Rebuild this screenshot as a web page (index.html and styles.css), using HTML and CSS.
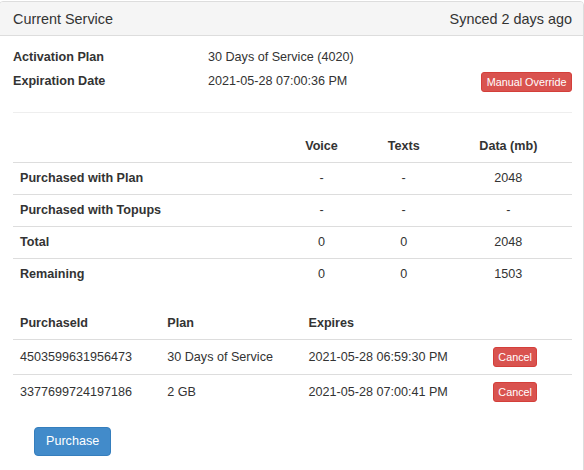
FILE: index.html
```html
<!DOCTYPE html>
<html>
<head>
<meta charset="utf-8">
<link rel="stylesheet" href="styles.css">
</head>
<body>
<div class="panel">
  <div class="panel-heading">
    <span class="title">Current Service</span>
    <span class="sync">Synced 2 days ago</span>
  </div>
  <div class="panel-body">
    <div class="info">
      <div class="info-label">Activation Plan</div>
      <div class="info-value">30 Days of Service (4020)</div>
      <div></div>
      <div class="info-label">Expiration Date</div>
      <div class="info-value">2021-05-28 07:00:36 PM</div>
      <div class="info-action"><button class="btn btn-xs btn-danger">Manual Override</button></div>
    </div>
    <hr class="divider">
    <table class="table usage">
      <colgroup>
        <col class="c-label"><col class="c-voice"><col class="c-texts"><col class="c-data">
      </colgroup>
      <thead>
        <tr><th></th><th class="center">Voice</th><th class="center">Texts</th><th class="center">Data (mb)</th></tr>
      </thead>
      <tbody>
        <tr><th>Purchased with Plan</th><td class="center">-</td><td class="center">-</td><td class="center">2048</td></tr>
        <tr><th>Purchased with Topups</th><td class="center">-</td><td class="center">-</td><td class="center">-</td></tr>
        <tr><th>Total</th><td class="center">0</td><td class="center">0</td><td class="center">2048</td></tr>
        <tr><th>Remaining</th><td class="center">0</td><td class="center">0</td><td class="center">1503</td></tr>
      </tbody>
    </table>
    <table class="table purchases">
      <colgroup>
        <col class="c-id"><col class="c-plan"><col class="c-exp"><col class="c-act">
      </colgroup>
      <thead>
        <tr><th>PurchaseId</th><th>Plan</th><th>Expires</th><th></th></tr>
      </thead>
      <tbody>
        <tr><td>4503599631956473</td><td>30 Days of Service</td><td>2021-05-28 06:59:30 PM</td><td><button class="btn btn-xs btn-danger">Cancel</button></td></tr>
        <tr><td>3377699724197186</td><td>2 GB</td><td>2021-05-28 07:00:41 PM</td><td><button class="btn btn-xs btn-danger">Cancel</button></td></tr>
      </tbody>
    </table>
    <div class="footer">
      <button class="btn btn-primary">Purchase</button>
    </div>
  </div>
</div>
</body>
</html>
```

FILE: styles.css
```css
html, body {
  margin: 0;
  padding: 0;
  background: #fff;
}
body {
  font-family: "Liberation Sans", Arial, sans-serif;
  font-size: 12.6px;
  line-height: 18px;
  color: #333;
  overflow: hidden;
}
.panel {
  margin: 1px 0 0 -1px;
  border: 1px solid #ddd;
  border-radius: 4px;
  background: #fff;
}
.panel-heading {
  display: flex;
  justify-content: space-between;
  align-items: center;
  height: 33px;
  padding: 0 11px 0 13px;
  background: #f5f5f5;
  border-bottom: 1px solid #ddd;
  border-radius: 3px 3px 0 0;
  font-size: 14.4px;
}
.panel-body {
  padding: 9px 11px 20px 13px;
}
.info {
  display: grid;
  grid-template-columns: 195px 1fr auto;
  grid-auto-rows: 24px;
  align-items: center;
}
.info-label {
  font-weight: bold;
}
.info-action {
  display: flex;
  justify-content: flex-end;
  align-self: center;
  padding-top: 2px;
}
.divider {
  margin: 19px 0 17px;
  border: 0;
  border-top: 1px solid #eee;
  height: 0;
}
.table {
  width: 100%;
  border-collapse: collapse;
  table-layout: fixed;
}
.table th, .table td {
  padding: 6px 7px 7px;
  text-align: left;
  vertical-align: middle;
  line-height: 18px;
}
.table th {
  font-weight: bold;
}
.table thead th {
  padding: 7px 7px;
  border-bottom: 1px solid #ddd;
}
.table tbody tr + tr td, .table tbody tr + tr th {
  border-top: 1px solid #ddd;
}
.table .center {
  text-align: center;
}
.c-label { width: 267px; }
.c-voice { width: 82px; }
.c-texts { width: 82px; }
.c-data { width: 127px; }
.purchases {
  margin-top: 17px;
}
.purchases tbody td {
  padding: 7px 7px;
}
.c-id { width: 147px; }
.c-plan { width: 141px; }
.c-exp { width: 184px; }
.c-act { width: 86px; }
.btn {
  display: inline-block;
  font-family: "Liberation Sans", Arial, sans-serif;
  border: 1px solid transparent;
  cursor: pointer;
  margin: 0;
}
.btn-xs {
  font-size: 10.8px;
  line-height: 16px;
  padding: 1px 4.5px;
  border-radius: 3px;
}
.btn-danger {
  color: #fff;
  background: #d9534f;
  border-color: #d43f3a;
}
.btn-primary {
  font-size: 12.6px;
  line-height: 17px;
  padding: 5px 11px;
  border-radius: 4px;
  color: #fff;
  background: #428bca;
  border-color: #357ebd;
}
.footer {
  padding: 18px 0 0 21px;
}
```
